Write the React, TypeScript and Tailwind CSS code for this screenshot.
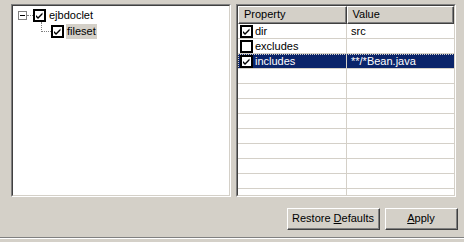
import React from "react";

function Check({ checked }: { checked: boolean }) {
  return (
    <svg width="13" height="13" viewBox="0 0 13 13" className="block shrink-0">
      <rect x="1" y="1" width="11" height="11" fill="#ffffff" stroke="#000000" strokeWidth="2" />
      {checked && (
        <path d="M3 6 L5 8 L9.5 3.5 L9.5 5.5 L5 10 L3 8 Z" fill="#000000" />
      )}
    </svg>
  );
}

const rows = [
  { name: "dir", value: "src", checked: true, selected: false },
  { name: "excludes", value: "", checked: false, selected: false },
  { name: "includes", value: "**/*Bean.java", checked: true, selected: true },
];

export default function App() {
  const empty = Array.from({ length: 9 });
  return (
    <div
      className="w-[464px] h-[242px] bg-[#d4d0c8] flex flex-col overflow-hidden text-[11px] text-black"
      style={{ fontFamily: '"Liberation Sans", Arial, sans-serif' }}
    >
      <div className="flex gap-[5px] pl-[11px] pt-[4px] h-[197px]">
        {/* Tree */}
        <div className="w-[220px] h-[193px] border-t border-l border-t-[#808080] border-l-[#808080] border-r border-b border-r-white border-b-white">
          <div className="w-full h-full bg-white border-t border-l border-t-[#404040] border-l-[#404040] border-r border-b border-r-[#d4d0c8] border-b-[#d4d0c8] pt-[1px]">
            <div className="flex items-center h-[16px] pl-[5px]">
              <div className="w-[9px] h-[9px] border border-[#808080] flex items-center justify-center bg-white">
                <div className="w-[5px] h-[1px] bg-black" />
              </div>
              <div className="w-[6px] border-t border-dotted border-[#808080]" />
              <Check checked />
              <span className="ml-[3px] leading-[14px]">ejbdoclet</span>
            </div>
            <div className="flex items-center h-[16px] pl-[28px] relative">
              <div className="absolute left-[28px] top-[-1px] w-[1px] h-[8px] border-l border-dotted border-[#808080]" />
              <div className="w-[10px] border-t border-dotted border-[#808080]" />
              <Check checked />
              <span className="ml-[2px] px-[1px] bg-[#d4d0c8] leading-[15px]">fileset</span>
            </div>
          </div>
        </div>
        {/* Table */}
        <div className="w-[220px] h-[193px] border-t border-l border-t-[#808080] border-l-[#808080] border-r border-b border-r-white border-b-white">
          <div className="w-full h-full bg-white border-t border-l border-t-[#404040] border-l-[#404040] border-r border-b border-r-[#d4d0c8] border-b-[#d4d0c8] flex flex-col overflow-hidden">
            <div className="flex h-[18px] shrink-0">
              <div className="w-[109px] h-full border-t border-l border-t-white border-l-white border-r border-b border-r-[#404040] border-b-[#404040]">
                <div className="h-full bg-[#d4d0c8] border-r border-b border-r-[#808080] border-b-[#808080] pl-[5px] leading-[15px]">
                  Property
                </div>
              </div>
              <div className="w-[108px] h-full border-t border-l border-t-white border-l-white border-r border-b border-r-[#404040] border-b-[#404040]">
                <div className="h-full bg-[#d4d0c8] border-r border-b border-r-[#808080] border-b-[#808080] pl-[5px] leading-[15px]">
                  Value
                </div>
              </div>
            </div>
            {rows.map((r) => (
              <div
                key={r.name}
                className={
                  r.selected
                    ? "flex h-[15px] shrink-0 w-[217px] bg-[#0a246a] text-white outline outline-1 outline-dotted outline-offset-[-1px] outline-[#d4d0c8]"
                    : "flex h-[15px] shrink-0 w-[217px]"
                }
              >
                <div className="w-[109px] h-full border-r border-b border-[#d4d0c8] flex items-center pl-[2px]">
                  <Check checked={r.checked} />
                  <span className="ml-[2px] leading-[14px]">{r.name}</span>
                </div>
                <div className="w-[108px] h-full border-b border-[#d4d0c8] flex items-center pl-[4px]">
                  <span className="leading-[14px]">{r.value}</span>
                </div>
              </div>
            ))}
            {empty.map((_, i) => (
              <div key={i} className="flex h-[15px] shrink-0 w-[217px]">
                <div className="w-[109px] h-full border-r border-b border-[#d4d0c8]" />
                <div className="w-[108px] h-full border-b border-[#d4d0c8]" />
              </div>
            ))}
          </div>
        </div>
      </div>
      {/* Buttons */}
      <div className="flex justify-end gap-[5px] pr-[6px] pt-[11px] h-[40px]">
        <button className="w-[93px] h-[22px] border-t border-l border-t-white border-l-white border-r border-b border-r-[#404040] border-b-[#404040] bg-[#d4d0c8] p-0">
          <div className="w-full h-full border-r border-b border-r-[#808080] border-b-[#808080] flex items-center justify-center">
            Restore <span className="underline ml-[3px]">D</span>efaults
          </div>
        </button>
        <button className="w-[73px] h-[22px] border-t border-l border-t-white border-l-white border-r border-b border-r-[#404040] border-b-[#404040] bg-[#d4d0c8] p-0">
          <div className="w-full h-full border-r border-b border-r-[#808080] border-b-[#808080] flex items-center justify-center">
            <span className="underline">A</span>pply
          </div>
        </button>
      </div>
      <div className="h-[1px] bg-[#808080]" />
      <div className="h-[1px] bg-white" />
    </div>
  );
}
